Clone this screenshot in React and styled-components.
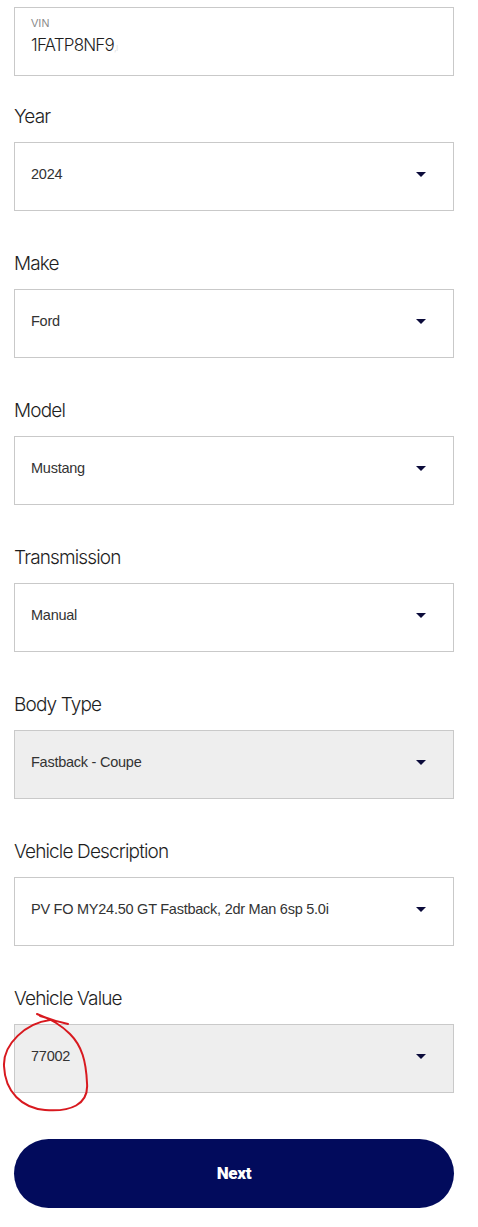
import styled, { createGlobalStyle } from 'styled-components';

const GlobalStyle = createGlobalStyle`
	body {
		margin: 0;
		background: #fff;
		font-family: 'Liberation Sans', Arial, sans-serif;
		color: #222;
	}
`;

const Page = styled.div`
	display: flex;
	flex-direction: column;
	width: 440px;
	padding: 7px 14px 20px 14px;
`;

const VinBox = styled.div`
	display: flex;
	flex-direction: column;
	height: 69px;
	box-sizing: border-box;
	padding: 8px 16px 0 16px;
	border: 1px solid #c9c9c9;
	margin-bottom: 29px;

	& .vin-label {
		font-size: 11px;
		color: #8a8a8a;
		line-height: 14px;
	}

	& .vin-value {
		font-family: Inter, 'Liberation Sans', sans-serif;
		font-weight: 300;
		font-size: 17px;
		color: #1e1e1e;
		line-height: 24px;
		margin-top: 3px;
		letter-spacing: -0.8px;
	}

	& .vin-fade {
		color: #dcdcdc;
		font-size: 10px;
	}
`;

const Field = styled.div`
	display: flex;
	flex-direction: column;
	margin-bottom: 41px;
	position: relative;
`;

const Label = styled.div`
	font-family: Inter, 'Liberation Sans', sans-serif;
	font-weight: 300;
	font-size: 19px;
	line-height: 24px;
	letter-spacing: -0.85px;
	color: #1e1e1e;
	margin-bottom: 13px;
`;

const SelectBox = styled.div`
	display: flex;
	align-items: center;
	justify-content: space-between;
	height: 69px;
	box-sizing: border-box;
	padding: 0 27px 5px 16px;
	border: 1px solid #c9c9c9;
	background: ${({ $disabled }) => ($disabled ? '#eeeeee' : '#fff')};
	font-size: 14.5px;
	letter-spacing: -0.25px;
	color: #333;
`;

const Caret = styled.span`
	width: 0;
	height: 0;
	border-left: 5px solid transparent;
	border-right: 5px solid transparent;
	border-top: 5px solid #0b0b3a;
	margin-top: 1px;
`;

const Scribble = styled.svg`
	position: absolute;
	left: -14px;
	top: 19px;
	width: 100px;
	height: 110px;
	pointer-events: none;
`;

const NextButton = styled.button`
	height: 69px;
	margin-top: 5px;
	padding-bottom: 3px;
	border: none;
	border-radius: 35px;
	background: #020b5c;
	color: #fff;
	font-family: Roboto, 'Liberation Sans', sans-serif;
	font-weight: 900;
	font-size: 17px;
	letter-spacing: -0.3px;
`;

const fields = [
	{ label: 'Year', value: '2024' },
	{ label: 'Make', value: 'Ford' },
	{ label: 'Model', value: 'Mustang' },
	{ label: 'Transmission', value: 'Manual' },
	{ label: 'Body Type', value: 'Fastback - Coupe', disabled: true },
	{ label: 'Vehicle Description', value: 'PV FO MY24.50 GT Fastback, 2dr Man 6sp 5.0i' },
	{ label: 'Vehicle Value', value: '77002', disabled: true, marked: true },
];

export default function App() {
	return (
		<>
			<GlobalStyle />
			<Page>
				<VinBox>
					<span className="vin-label">VIN</span>
					<span className="vin-value">
						1FATP8NF9<span className="vin-fade">,ı</span>
					</span>
				</VinBox>
				{fields.map((f) => (
					<Field key={f.label}>
						<Label>{f.label}</Label>
						<SelectBox $disabled={f.disabled}>
							<span>{f.value}</span>
							<Caret />
						</SelectBox>
						{f.marked && (
							<Scribble viewBox="0 0 100 110">
								<path
									d="M37 8 C48 13 58 16 68 18 M50 14 C26 17 3 38 4 60 C5 86 22 102 45 104 C70 106 89 99 87 77 C86 55 82 40 70 28 C62 20 50 12 40 10"
									fill="none"
									stroke="#d8191f"
									strokeWidth="2"
									strokeLinecap="round"
								/>
							</Scribble>
						)}
					</Field>
				))}
				<NextButton>Next</NextButton>
			</Page>
		</>
	);
}
